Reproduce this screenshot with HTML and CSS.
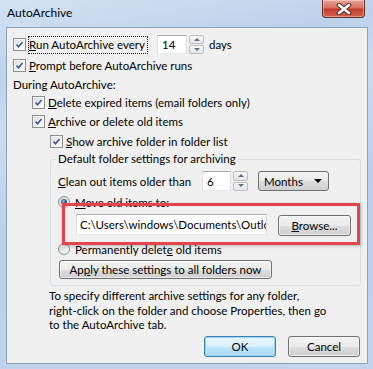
FILE: index.html
```html
<!DOCTYPE html>
<html lang="en">
<head>
    <meta charset="UTF-8">
    <meta name="viewport" content="width=device-width, initial-scale=1.0">
    <title>AutoArchive</title>
    <link rel="stylesheet" href="styles.css">
</head>
<body>
    <div class="window">
        <div class="titlebar">
            <span class="title">AutoArchive</span>
            <div class="close-btn">
                <svg width="16" height="12" viewBox="0 0 16 12">
                    <path d="M3 2 L13 10 M13 2 L3 10" stroke="#5a2a26" stroke-width="4.6" stroke-linecap="round"/>
                    <path d="M3 2 L13 10 M13 2 L3 10" stroke="#ffffff" stroke-width="2.6" stroke-linecap="round"/>
                </svg>
            </div>
        </div>

        <div class="client">
            <!-- Schedule -->
            <div class="row row-run">
                <label class="check run-label">
                    <span class="box"><svg class="tick" viewBox="0 0 13 13"><path d="M3 6.6 L5.4 9.2 L10 3.4"/></svg></span>
                    <span class="focus-rect"><u>R</u>un AutoArchive every</span>
                </label>
                <div class="spin spin-days">
                    <div class="textbox">14</div>
                    <div class="spin-btns">
                        <span class="spin-up"></span>
                        <span class="spin-down"></span>
                    </div>
                </div>
                <span class="unit">days</span>
            </div>
            <div class="row row-prompt">
                <label class="check">
                    <span class="box"><svg class="tick" viewBox="0 0 13 13"><path d="M3 6.6 L5.4 9.2 L10 3.4"/></svg></span>
                    <span><u>P</u>rompt before AutoArchive runs</span>
                </label>
            </div>
            <div class="row row-during">During AutoArchive:</div>
            <div class="row row-delete indent1">
                <label class="check">
                    <span class="box"><svg class="tick" viewBox="0 0 13 13"><path d="M3 6.6 L5.4 9.2 L10 3.4"/></svg></span>
                    <span><u>D</u>elete expired items (email folders only)</span>
                </label>
            </div>
            <div class="row row-archive indent1">
                <label class="check">
                    <span class="box"><svg class="tick" viewBox="0 0 13 13"><path d="M3 6.6 L5.4 9.2 L10 3.4"/></svg></span>
                    <span><u>A</u>rchive or delete old items</span>
                </label>
            </div>
            <div class="row row-show indent2">
                <label class="check">
                    <span class="box"><svg class="tick" viewBox="0 0 13 13"><path d="M3 6.6 L5.4 9.2 L10 3.4"/></svg></span>
                    <span><u>S</u>how archive folder in folder list</span>
                </label>
            </div>

            <!-- Default folder settings -->
            <fieldset class="group">
                <legend>Default folder settings for archiving</legend>
                <div class="row row-clean">
                    <span class="clean-label"><u>C</u>lean out items older than</span>
                    <div class="spin spin-age">
                        <div class="textbox">6</div>
                        <div class="spin-btns">
                            <span class="spin-up"></span>
                            <span class="spin-down"></span>
                        </div>
                    </div>
                    <div class="combo">
                        <span>Months</span>
                        <span class="combo-arrow"></span>
                    </div>
                </div>
                <label class="row radio-row row-move">
                    <span class="radio on"></span>
                    <span><u>M</u>ove old items to:</span>
                </label>
                <div class="row row-path">
                    <div class="textbox path-box">C:\Users\windows\Documents\Outlo</div>
                    <button class="btn browse-btn"><u>B</u>rowse...</button>
                </div>
                <label class="row radio-row row-perm">
                    <span class="radio"></span>
                    <span>Permanently delet<u>e</u> old items</span>
                </label>
                <button class="btn apply-btn">Ap<u>p</u>ly these settings to all folders now</button>
            </fieldset>

            <p class="hint">To specify different archive settings for any folder,<br>right-click on the folder and choose Properties, then go<br>to the AutoArchive tab.</p>

            <div class="actions">
                <button class="btn default-btn">OK</button>
                <button class="btn">Cancel</button>
            </div>
        </div>
    </div>

    <!-- annotation -->
    <div class="highlight"></div>
</body>
</html>
```

FILE: styles.css
```css
body {
    margin: 0;
    width: 373px;
    height: 369px;
    overflow: hidden;
    font-family: Lato, "Noto Sans", sans-serif;
    font-size: 11.5px;
    color: #000;
    background-color: #bdd2ea;
    white-space: nowrap;
}
.window {
    height: 369px;
    background: linear-gradient(170deg, #d2e2f3 0%, #bcd2eb 18%, #cadcf1 30%, #bad0ea 55%, #c0d5ec 100%);
}
.titlebar {
    height: 27px;
    display: flex;
    justify-content: space-between;
    align-items: flex-start;
}
.title {
    margin: 5px 0 0 7px;
    line-height: 16px;
    font-size: 12px;
}
.close-btn {
    width: 43px;
    height: 18px;
    margin-right: 8px;
    box-sizing: border-box;
    border: 1px solid #6b2d27;
    border-top: none;
    border-radius: 0 0 4px 4px;
    background: linear-gradient(#e9a595 0%, #d86e5e 45%, #c43c2c 55%, #d2634f 100%);
    box-shadow: inset 0 0 0 1px rgba(255,255,255,0.35);
    display: flex;
    align-items: center;
    justify-content: center;
}
.client {
    height: 337px;
    margin: 0 5px 0 6px;
    box-sizing: border-box;
    border: 1px solid #8ba1bc;
    background-color: #f0f0f0;
    padding: 6px 0 0 6px;
}
.row {
    display: flex;
    align-items: center;
}
.row-run { height: 21px; }
.row-prompt { height: 21px; }
.row-during { height: 17px; }
.row-delete { height: 19px; }
.row-archive { height: 19px; }
.row-show { height: 20px; }
.indent1 { margin-left: 19px; }
.indent2 { margin-left: 37px; }
u {
    text-decoration: underline;
    text-underline-offset: 1px;
}
.check {
    display: flex;
    align-items: center;
    gap: 3px;
}
.run-label {
    width: 144px;
}
.focus-rect {
    outline: 1px dotted #222;
    outline-offset: 0;
    padding: 0 2px 0 0;
    line-height: 16px;
}
.box {
    width: 13px;
    height: 13px;
    box-sizing: border-box;
    border: 1px solid #8e8f8f;
    background: linear-gradient(135deg, #d9d9d9, #f7f7f7 70%, #ffffff);
    box-shadow: inset 0 0 0 1px #f4f4f4;
    display: inline-block;
    flex-shrink: 0;
}
.tick {
    display: block;
    width: 11px;
    height: 11px;
}
.tick path {
    fill: none;
    stroke: #3b5b9c;
    stroke-width: 1.9;
}
.spin {
    display: flex;
    align-items: stretch;
    gap: 2px;
}
.textbox {
    box-sizing: border-box;
    background-color: #fff;
    border: 1px solid #dbdfe6;
    border-top-color: #abadb3;
    border-bottom-color: #e3e9ef;
    padding: 0 4px;
    display: flex;
    align-items: center;
    overflow: hidden;
}
.spin-days .textbox { width: 30px; height: 19px; }
.spin-age .textbox { width: 29px; height: 20px; }
.spin-btns {
    width: 15px;
    display: flex;
    flex-direction: column;
    gap: 1px;
}
.spin-btns span {
    flex: 1;
    border: 1px solid #bcbcbc;
    border-radius: 2px;
    background: linear-gradient(#f8f8f8, #e4e4e4);
    position: relative;
}
.spin-btns span::after {
    content: "";
    position: absolute;
    left: 50%;
    top: 50%;
    margin: -2px 0 0 -3px;
    border-left: 3px solid transparent;
    border-right: 3px solid transparent;
}
.spin-up::after { border-bottom: 3px solid #5a6f8e; }
.spin-down::after { border-top: 3px solid #5a6f8e; }
.unit {
    margin-left: 5px;
}
.group {
    margin: 0 0 0 37px;
    width: 311px;
    box-sizing: border-box;
    border: 1px solid #d5dfe5;
    border-radius: 3px;
    padding: 4px 0 6px 5px;
}
.group legend {
    padding: 0 2px;
    line-height: 16px;
}
.row-clean {
    height: 20px;
    padding-left: 2px;
}
.clean-label {
    width: 144px;
}
.combo {
    width: 71px;
    height: 20px;
    margin-left: 10px;
    box-sizing: border-box;
    border: 1px solid #707070;
    border-radius: 3px;
    background: linear-gradient(#f2f2f2 0%, #ebebeb 50%, #dddddd 50%, #cfcfcf 100%);
    display: flex;
    align-items: center;
    justify-content: space-between;
    padding: 0 6px 0 5px;
}
.combo-arrow {
    border-left: 4px solid transparent;
    border-right: 4px solid transparent;
    border-top: 4px solid #000;
}
.radio-row {
    gap: 5px;
    padding-left: 2px;
}
.row-move { height: 22px; }
.row-perm { height: 20px; margin-top: 4px; }
.radio {
    width: 12px;
    height: 12px;
    box-sizing: border-box;
    border: 1px solid #8e8f8f;
    border-radius: 50%;
    background: linear-gradient(135deg, #d6d6d6, #fbfbfb);
    display: flex;
    align-items: center;
    justify-content: center;
}
.radio.on::after {
    content: "";
    width: 6px;
    height: 6px;
    border-radius: 50%;
    background: radial-gradient(circle at 40% 40%, #8fb5e4, #2a4d80 60%, #0f2a4d);
}
.row-path {
    height: 22px;
    padding-left: 20px;
    gap: 11px;
}
.path-box {
    width: 191px;
    height: 21px;
    padding: 0 3px;
}
.btn {
    font-family: inherit;
    font-size: inherit;
    color: #000;
    box-sizing: border-box;
    border: 1px solid #707070;
    border-radius: 3px;
    background: linear-gradient(#f2f2f2 0%, #ebebeb 50%, #dddddd 50%, #cfcfcf 100%);
    box-shadow: inset 0 0 0 1px rgba(255,255,255,0.6);
    padding: 0;
    cursor: default;
}
.browse-btn {
    width: 73px;
    height: 21px;
    margin-top: 3px;
}
.apply-btn {
    display: block;
    width: 213px;
    height: 19px;
    margin: 1px 0 0 3px;
}
.hint {
    margin: 3px 0 0 36px;
    line-height: 14.5px;
}
.actions {
    display: flex;
    justify-content: flex-end;
    gap: 12px;
    margin: 3px 7px 0 0;
}
.actions .btn {
    width: 72px;
    height: 21px;
}
.default-btn {
    border-color: #3c7fb1;
    box-shadow: inset 0 0 0 1px #9fd5f5;
    background: linear-gradient(#eaf6fd 0%, #d9f0fc 50%, #bee6fd 50%, #a7d9f5 100%);
}
.highlight {
    position: absolute;
    left: 62px;
    top: 203px;
    width: 298px;
    height: 42px;
    box-sizing: border-box;
    border: 3px solid #e3434d;
    box-shadow: 1px 1px 3px rgba(0,0,0,0.25);
}
```
